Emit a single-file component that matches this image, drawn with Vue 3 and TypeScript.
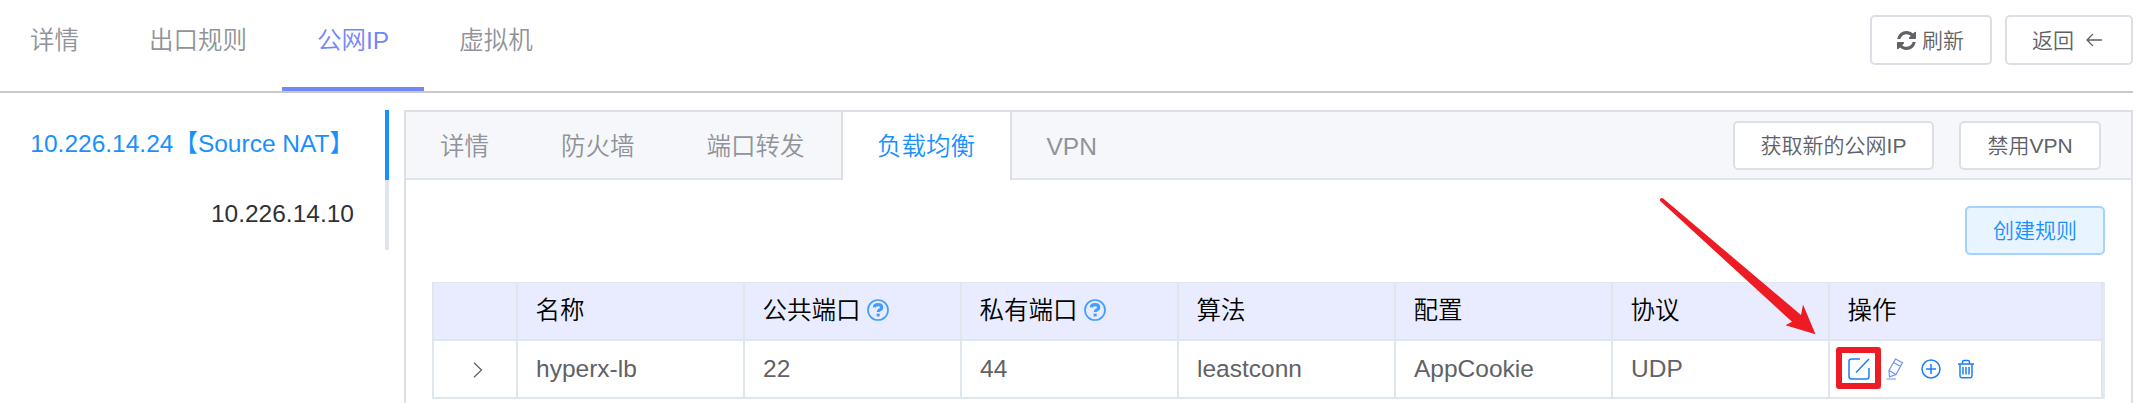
<script setup lang="ts">
interface Column {
  key: string
  label: string
  help?: boolean
}

const navTabs: string[] = ['详情', '出口规则', '公网IP', '虚拟机']
const activeNav = '公网IP'

const addresses: string[] = ['10.226.14.24【Source NAT】', '10.226.14.10']
const activeAddress = addresses[0]

const cardTabs: string[] = ['详情', '防火墙', '端口转发', '负载均衡', 'VPN']
const activeCardTab = '负载均衡'

const columns: Column[] = [
  { key: 'name', label: '名称' },
  { key: 'publicPort', label: '公共端口', help: true },
  { key: 'privatePort', label: '私有端口', help: true },
  { key: 'algorithm', label: '算法' },
  { key: 'config', label: '配置' },
  { key: 'protocol', label: '协议' },
]

const rows: Record<string, string>[] = [
  {
    name: 'hyperx-lb',
    publicPort: '22',
    privatePort: '44',
    algorithm: 'leastconn',
    config: 'AppCookie',
    protocol: 'UDP',
  },
]
</script>

<template>
  <div class="page">
    <header class="topbar">
      <nav class="nav">
        <a v-for="t in navTabs" :key="t" class="nav-tab" :class="{ active: t === activeNav }">{{ t }}</a>
      </nav>
      <div class="top-actions">
        <button class="btn refresh">
          <svg class="refresh-icon" viewBox="0 0 1536 1536">
            <path
              d="M1511 928q0 5-1 7-64 268-268 434.500T764 1536q-146 0-282.500-55T238 1324l-129 129q-19 19-45 19t-45-19-19-45V960q0-26 19-45t45-19h448q26 0 45 19t19 45-19 45l-137 137q71 66 161 102t187 36q134 0 250-65t186-179q11-17 53-117 8-23 30-23h192q13 0 22.500 9.500t9.500 22.500zm25-800v448q0 26-19 45t-45 19h-448q-26 0-45-19t-19-45 19-45l138-138Q969 256 768 256q-134 0-250 65T332 500q-11 17-53 117-8 23-30 23H50q-13 0-22.500-9.500T18 608v-7q65-268 270-434.500T768 0q146 0 284 55.500T1297 212l130-129q19-19 45-19t45 19 19 45z"
            />
          </svg>
          <span>刷新</span>
        </button>
        <button class="btn back">
          <span>返回</span>
          <svg class="back-icon" viewBox="0 0 16 14">
            <path d="M16 7H1M7 1L1 7l6 6" />
          </svg>
        </button>
      </div>
    </header>

    <main class="content">
      <aside class="sidebar">
        <div v-for="a in addresses" :key="a" class="address" :class="{ active: a === activeAddress }">{{ a }}</div>
      </aside>

      <section class="card">
        <div class="card-head">
          <a v-for="t in cardTabs" :key="t" class="card-tab" :class="{ active: t === activeCardTab }">{{ t }}</a>
          <div class="card-actions">
            <button class="btn">获取新的公网IP</button>
            <button class="btn">禁用VPN</button>
          </div>
        </div>

        <div class="card-body">
          <div class="toolbar">
            <button class="btn primary">创建规则</button>
          </div>

          <div class="table">
            <div class="row head">
              <div class="cell"></div>
              <div v-for="c in columns" :key="c.key" class="cell">
                <span>{{ c.label }}</span>
                <svg v-if="c.help" class="help" viewBox="0 0 22 22">
                  <circle cx="11" cy="11" r="10" />
                  <path d="M7.300 8.400Q7.600 5.700 11.100 5.700q3.600 0 3.600 2.700 0 1.300-1.600 2.200-1.900 1-1.900 2.500" />
                  <rect x="9.600" y="14.600" width="3.100" height="2.800" />
                </svg>
              </div>
              <div class="cell">操作</div>
            </div>
            <div v-for="r in rows" :key="r.name" class="row">
              <div class="cell expand">
                <svg viewBox="0 0 10 16"><path d="M1 .8L8.500 8 1 15.200" /></svg>
              </div>
              <div v-for="c in columns" :key="c.key" class="cell">{{ r[c.key] }}</div>
              <div class="cell ops">
                <span class="marked">
                  <svg class="edit" viewBox="0 0 22 22">
                    <path d="M12 1H3.500Q1 1 1 3.500v15Q1 21 3.500 21h15q2.500 0 2.500-2.500V10M8 14.500L21 1" />
                  </svg>
                </span>
                <svg class="pencil" viewBox="0 0 18 22">
                  <path d="M9.500 1l7 3.800-6.500 11.700-6.500 2.300L3 12.500zM7.500 4.500l7 3.800M3 12.500l7 4M.5 21h9.500" />
                </svg>
                <svg class="add" viewBox="0 0 20 20">
                  <circle cx="10" cy="10" r="9" />
                  <path d="M10 5v10M5 10h10" />
                </svg>
                <svg class="trash" viewBox="0 0 16 20">
                  <path d="M0 5h16M4.500 5V3q0-1.500 1.500-1.500h4q1.500 0 1.500 1.500v2M2 5v12q0 1.700 1.700 1.700h8.600q1.700 0 1.700-1.700V5M5 8v7.500M8 8v7.500M11 8v7.500" />
                </svg>
              </div>
            </div>
          </div>
        </div>
      </section>
    </main>

    <svg class="pointer" viewBox="0 0 160 144">
      <path d="M1.200 2Q2.500.2 4.500 1.700L142 118l2-10.500 12.500 29.800-30-9 6.500-3.600L1.800 4.600Q.4 3.300 1.200 2z" />
    </svg>
  </div>
</template>

<style>
body {
  margin: 0;
  background: #fff;
  overflow: hidden;
}
</style>

<style scoped>
.page {
  position: relative;
  box-sizing: border-box;
  width: 2136px;
  height: 403px;
  padding-right: 3px;
  overflow: hidden;
  color: #606266;
  font: 350 24.5px/1 'Liberation Sans', 'Noto Sans CJK SC', sans-serif;
  white-space: nowrap;
}

svg {
  display: block;
  flex: none;
}

.topbar {
  display: flex;
  justify-content: space-between;
  box-sizing: border-box;
  height: 93px;
  border-bottom: 2px solid #c9c9c9;
}

.nav {
  display: flex;
  margin-left: -5px;
}

.nav-tab {
  box-sizing: border-box;
  height: 91px;
  padding: 0 35px;
  border-bottom: 4px solid transparent;
  color: #909399;
  line-height: 82px;
}

.nav-tab.active {
  border-color: #7388f5;
  color: #7388f5;
}

.top-actions {
  display: flex;
  gap: 13px;
  padding-top: 15px;
}

.btn {
  display: flex;
  align-items: center;
  justify-content: center;
  box-sizing: border-box;
  height: 49px;
  margin: 0;
  padding: 0 26px;
  border: 2px solid #dcdfe6;
  border-radius: 5px;
  background: #fff;
  color: #606266;
  font: inherit;
  font-size: 21px;
}

.top-actions .btn {
  height: 50px;
}

.refresh {
  width: 122px;
  gap: 6px;
}

.refresh-icon {
  width: 19px;
  height: 19px;
  margin-left: -1px;
  fill: #606266;
}

.top-actions .back {
  justify-content: flex-start;
  width: 128px;
  gap: 12px;
  padding-left: 25px;
}

.back-icon {
  width: 16px;
  height: 14px;
  fill: none;
  stroke: #606266;
  stroke-width: 1.300;
}

.content {
  display: flex;
  height: 293px;
  padding-top: 17px;
}

.sidebar {
  width: 389px;
  margin-right: 15px;
}

.address {
  box-sizing: border-box;
  height: 70px;
  padding-right: 31px;
  border-right: 4px solid #e0e4ed;
  color: #303133;
  line-height: 68px;
  text-align: right;
}

.address.active {
  border-color: #1890ff;
  color: #1890ff;
}

.card {
  flex: 1;
  box-sizing: border-box;
  border: 2px solid #dcdfe6;
  border-bottom: 0;
}

.card-head {
  display: flex;
  box-sizing: border-box;
  height: 68px;
  background: #f5f7fa;
  box-shadow: inset 0 -2px #dfe4ed;
}

.card-tab {
  padding: 0 36px;
  color: #909399;
  line-height: 70px;
}

.card-tab:first-child {
  padding-left: 34px;
}

.card-tab.active {
  padding: 0 34.500px;
  border: solid #dcdfe6;
  border-width: 0 2px;
  background: #fff;
  color: #1890ff;
}

.card-tab:nth-child(5) {
  padding-left: 35px;
}

.card-actions {
  display: flex;
  gap: 25px;
  margin-left: auto;
  padding: 9px 30px 0 0;
}

.card-body {
  padding: 26px 26px 0;
}

.toolbar {
  display: flex;
  justify-content: flex-end;
  margin-bottom: 27px;
}

.card-actions .btn:first-child {
  width: 201px;
}

.card-actions .btn:last-child {
  width: 142px;
}

.btn.primary {
  border-color: #a3d3ff;
  background: #e8f4ff;
  color: #1890ff;
}

.table {
  box-sizing: border-box;
  border: solid #dfe6ec;
  border-width: 1px 2px 2px;
  border-right-color: #e4e9f5;
}

.row {
  display: grid;
  grid-template-columns: 84px 227px 217px 217px 217px 217px 217px 1fr;
  height: 56px;
}

.row.head {
  height: 58px;
  background: #e8ecfe;
  color: #000;
}

.cell {
  display: flex;
  align-items: center;
  box-sizing: border-box;
  padding: 0 17px 0 18px;
  border-right: 2px solid #dfe6ec;
}

.head .cell {
  padding-top: 1px;
  padding-left: 17.500px;
  border-bottom: 2px solid #dfe6ec;
}

.help {
  width: 22px;
  height: 22px;
  margin: -3px 0 0 6px;
  fill: none;
  stroke: #409eff;
  stroke-width: 1.700;
}

.help path {
  stroke-width: 3.200;
}

.help rect {
  fill: #409eff;
  stroke: none;
}

.expand {
  justify-content: center;
  padding: 2px 0 0 5px;
}

.expand svg {
  width: 10px;
  height: 16px;
  fill: none;
  stroke: #606266;
  stroke-width: 1.300;
}

.ops {
  padding: 0 0 0 6px;
}

.ops svg {
  fill: none;
  stroke: #1c80f0;
  stroke-width: 1.500;
}

.marked {
  display: flex;
  align-items: center;
  justify-content: center;
  box-sizing: border-box;
  width: 45px;
  height: 42px;
  margin-top: -2px;
  border: 6px solid #ed1c24;
  border-radius: 3px;
}

.ops .edit {
  width: 22px;
  height: 22px;
  margin-top: 2px;
}

.ops .pencil {
  width: 18px;
  height: 22px;
  margin-left: 5px;
  stroke: #6f93f2;
  stroke-width: 1.200;
}

.ops .add {
  width: 20px;
  height: 20px;
  margin-left: 17px;
}

.ops .trash {
  width: 16px;
  height: 20px;
  margin-left: 17px;
}

/* Callout arrow floating over the table */
.pointer {
  position: absolute;
  left: 1659px;
  top: 197px;
  width: 160px;
  height: 144px;
  fill: #ed1c24;
}
</style>
